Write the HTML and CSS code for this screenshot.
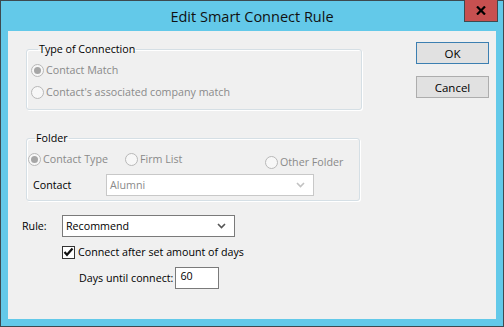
FILE: index.html
```html
<!DOCTYPE html>
<html lang="en">
<head>
  <meta charset="UTF-8">
  <title>Edit Smart Connect Rule</title>
  <link rel="stylesheet" href="styles.css">
</head>
<body>
  <div class="window">
    <div class="title-bar">
      <span class="title">Edit Smart Connect Rule</span>
      <button class="close-btn">
        <svg width="10" height="9" viewBox="0 0 10 9"><path d="M1 0.5 L9 8.5 M9 0.5 L1 8.5" stroke="#000" stroke-width="2.2"/></svg>
      </button>
    </div>

    <div class="client">
      <div class="main-col">
        <fieldset class="group group-type">
          <legend>Type of Connection</legend>
          <label class="radio-row disabled"><span class="radio checked"></span>Contact Match</label>
          <label class="radio-row disabled"><span class="radio"></span>Contact's associated company match</label>
        </fieldset>

        <fieldset class="group group-folder">
          <legend>Folder</legend>
          <div class="folder-radios">
            <label class="radio-row disabled type"><span class="radio checked"></span>Contact Type</label>
            <label class="radio-row disabled firm"><span class="radio"></span>Firm List</label>
            <label class="radio-row disabled other"><span class="radio"></span>Other Folder</label>
          </div>
          <div class="contact-row">
            <span class="contact-label">Contact</span>
            <div class="combo combo-disabled">
              <span>Alumni</span>
              <svg width="9" height="6" viewBox="0 0 9 6"><path d="M1 1 L4.5 4.5 L8 1" fill="none" stroke="#c2c2c2" stroke-width="1.6"/></svg>
            </div>
          </div>
        </fieldset>

        <div class="rule-row">
          <span class="rule-label">Rule:</span>
          <div class="combo combo-rule">
            <span>Recommend</span>
            <svg width="9" height="6" viewBox="0 0 9 6"><path d="M1 1 L4.5 4.5 L8 1" fill="none" stroke="#555" stroke-width="1.6"/></svg>
          </div>
        </div>

        <label class="check-row">
          <span class="checkbox">
            <svg width="11" height="10" viewBox="0 0 11 10"><path d="M1.5 5 L4 7.8 L9.5 1.5" fill="none" stroke="#111" stroke-width="2.2"/></svg>
          </span>
          Connect after set amount of days
        </label>

        <div class="days-row">
          <span>Days until connect:</span>
          <div class="days-input">60</div>
        </div>
      </div>

      <div class="button-col">
        <button class="btn btn-default">OK</button>
        <button class="btn">Cancel</button>
      </div>
    </div>
  </div>
</body>
</html>
```

FILE: styles.css
```css
* {
  box-sizing: border-box;
  margin: 0;
  padding: 0;
}

body {
  width: 504px;
  height: 327px;
  overflow: hidden;
  font-family: "Open Sans", "Noto Sans", sans-serif;
  font-size: 10.7px;
  color: #000;
}

.window {
  width: 504px;
  height: 327px;
  background-color: #63c9e9;
  border: 1px solid #3d4a50;
  display: flex;
  flex-direction: column;
}

.title-bar {
  position: relative;
  height: 30px;
  display: flex;
  justify-content: center;
  align-items: center;
}

.title {
  font-size: 14.5px;
  color: #111;
  margin-top: 1px;
}

.close-btn {
  position: absolute;
  top: -1px;
  right: 5px;
  width: 34px;
  height: 22px;
  background-color: #c75050;
  border: 1px solid #3d4a50;
  border-top: none;
  display: flex;
  justify-content: center;
  align-items: center;
}

.client {
  flex: 1;
  margin: 0 7px 7px 7px;
  background-color: #f0f0f0;
  display: flex;
  padding: 11px 7px 0 18px;
}

.main-col {
  width: 346px;
}

.group {
  border: 1px solid #d5dfe5;
  border-radius: 3px;
  box-shadow: 1px 1px 0 #fff, inset 1px 1px 0 #fff;
  padding: 3px 4px 0 4px;
}

.group legend {
  margin-left: 7px;
  padding: 0 1px;
  color: #000;
}

.group-type {
  width: 336px;
  height: 68px;
}

.group-folder {
  width: 334px;
  height: 70px;
  margin-top: 21px;
  padding-left: 1px;
  padding-top: 3px;
}

.radio-row {
  display: flex;
  align-items: center;
  gap: 2px;
  height: 22px;
}

.radio-row.disabled {
  color: #8a8a8a;
}

.radio {
  width: 13px;
  height: 13px;
  border-radius: 50%;
  border: 1px solid #b8b8b8;
  background-color: #f7f7f7;
  display: flex;
  justify-content: center;
  align-items: center;
}

.radio.checked::after {
  content: "";
  width: 7px;
  height: 7px;
  border-radius: 50%;
  background-color: #a6a6a6;
}

.folder-radios {
  display: flex;
  height: 20px;
}

.folder-radios .type {
  width: 97px;
}

.folder-radios .firm {
  width: 140px;
}

.folder-radios .other {
  margin-top: 3px;
}

.contact-row {
  display: flex;
  align-items: center;
  margin-top: 6px;
  padding-left: 5px;
}

.contact-label {
  width: 73px;
}

.combo {
  display: flex;
  justify-content: space-between;
  align-items: center;
  height: 22px;
  padding: 0 8px 0 3px;
  border: 1px solid #acacac;
  background-color: #fff;
}

.combo-disabled {
  width: 208px;
  color: #8a8a8a;
  border-color: #c8c8c8;
}

.rule-row {
  display: flex;
  align-items: center;
  margin-top: 14px;
  margin-left: -4px;
}

.rule-label {
  width: 40px;
}

.combo-rule {
  width: 173px;
  border-color: #7a7a7a;
}

.check-row {
  display: flex;
  align-items: center;
  gap: 3px;
  margin-top: 8px;
  margin-left: 36px;
}

.checkbox {
  width: 13px;
  height: 13px;
  border: 1px solid #333;
  background-color: #fff;
  display: flex;
  justify-content: center;
  align-items: center;
}

.days-row {
  display: flex;
  align-items: center;
  gap: 2px;
  margin-top: 8px;
  margin-left: 53px;
}

.days-input {
  width: 44px;
  height: 22px;
  border: 1px solid #7a7a7a;
  background-color: #fff;
  padding: 1px 0 0 4px;
}

.button-col {
  display: flex;
  flex-direction: column;
  gap: 12px;
  margin-left: 44px;
}

.btn {
  width: 73px;
  height: 22px;
  background-color: #e1e1e1;
  border: 1px solid #adadad;
  font-family: inherit;
  font-size: 11.5px;
  color: #000;
}

.btn-default {
  border-color: #3c7fb1;
}
```
